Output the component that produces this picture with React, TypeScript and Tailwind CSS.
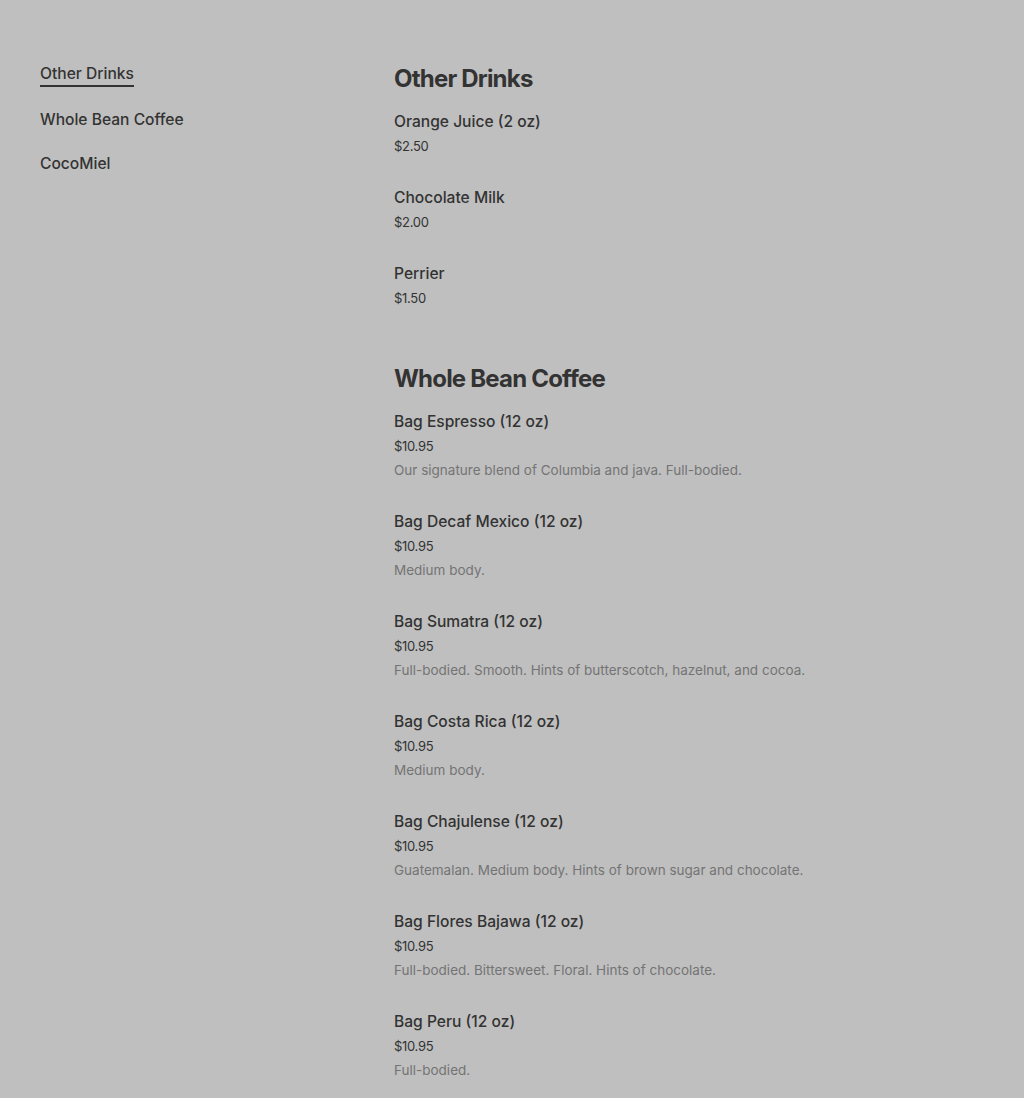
import React from "react";

type Item = { name: string; price: string; desc?: string };
type Section = { title: string; items: Item[] };

const sections: Section[] = [
  {
    title: "Other Drinks",
    items: [
      { name: "Orange Juice (2 oz)", price: "$2.50" },
      { name: "Chocolate Milk", price: "$2.00" },
      { name: "Perrier", price: "$1.50" },
    ],
  },
  {
    title: "Whole Bean Coffee",
    items: [
      { name: "Bag Espresso (12 oz)", price: "$10.95", desc: "Our signature blend of Columbia and java. Full-bodied." },
      { name: "Bag Decaf Mexico (12 oz)", price: "$10.95", desc: "Medium body." },
      { name: "Bag Sumatra (12 oz)", price: "$10.95", desc: "Full-bodied. Smooth. Hints of butterscotch, hazelnut, and cocoa." },
      { name: "Bag Costa Rica (12 oz)", price: "$10.95", desc: "Medium body." },
      { name: "Bag Chajulense (12 oz)", price: "$10.95", desc: "Guatemalan. Medium body. Hints of brown sugar and chocolate." },
      { name: "Bag Flores Bajawa (12 oz)", price: "$10.95", desc: "Full-bodied. Bittersweet. Floral. Hints of chocolate." },
      { name: "Bag Peru (12 oz)", price: "$10.95", desc: "Full-bodied." },
    ],
  },
];

export default function App() {
  return (
    <div
      className="min-h-[1098px] w-full bg-[#bfbfbf] text-[#333333] flex"
      style={{ fontFamily: "Inter, 'Noto Sans', sans-serif" }}
    >
      <nav className="w-[394px] shrink-0 pl-[40px] pt-[62px] flex flex-col items-start">
        <a className="text-[15.6px] leading-[22px] mt-[1px] font-medium text-[#333333] border-b-2 border-[#333333] mb-[21px]">
          Other Drinks
        </a>
        <a className="text-[15.6px] leading-[24px] font-medium text-[#333333] mb-[20px]">Whole Bean Coffee</a>
        <a className="text-[15.6px] leading-[24px] font-medium text-[#333333]">CocoMiel</a>
      </nav>
      <main className="pt-[63px] flex flex-col">
        {sections.map((s) => (
          <section key={s.title} className="mb-[26px]">
            <h2 className="text-[24px] leading-[32px] font-bold tracking-[-0.8px] text-[#333333] mb-[14px]">
              {s.title}
            </h2>
            {s.items.map((it) => (
              <div key={it.name} className={it.desc ? "mb-[28px]" : "mb-[26px]"}>
                <div className="text-[15.6px] leading-[24px] pt-[1px] font-medium text-[#333333]">{it.name}</div>
                <div className="text-[13px] leading-[25px] text-[#333333] tracking-[-0.3px]">{it.price}</div>
                {it.desc && (
                  <div className="text-[13.5px] leading-[22px] text-[#747474]">{it.desc}</div>
                )}
              </div>
            ))}
          </section>
        ))}
      </main>
    </div>
  );
}
